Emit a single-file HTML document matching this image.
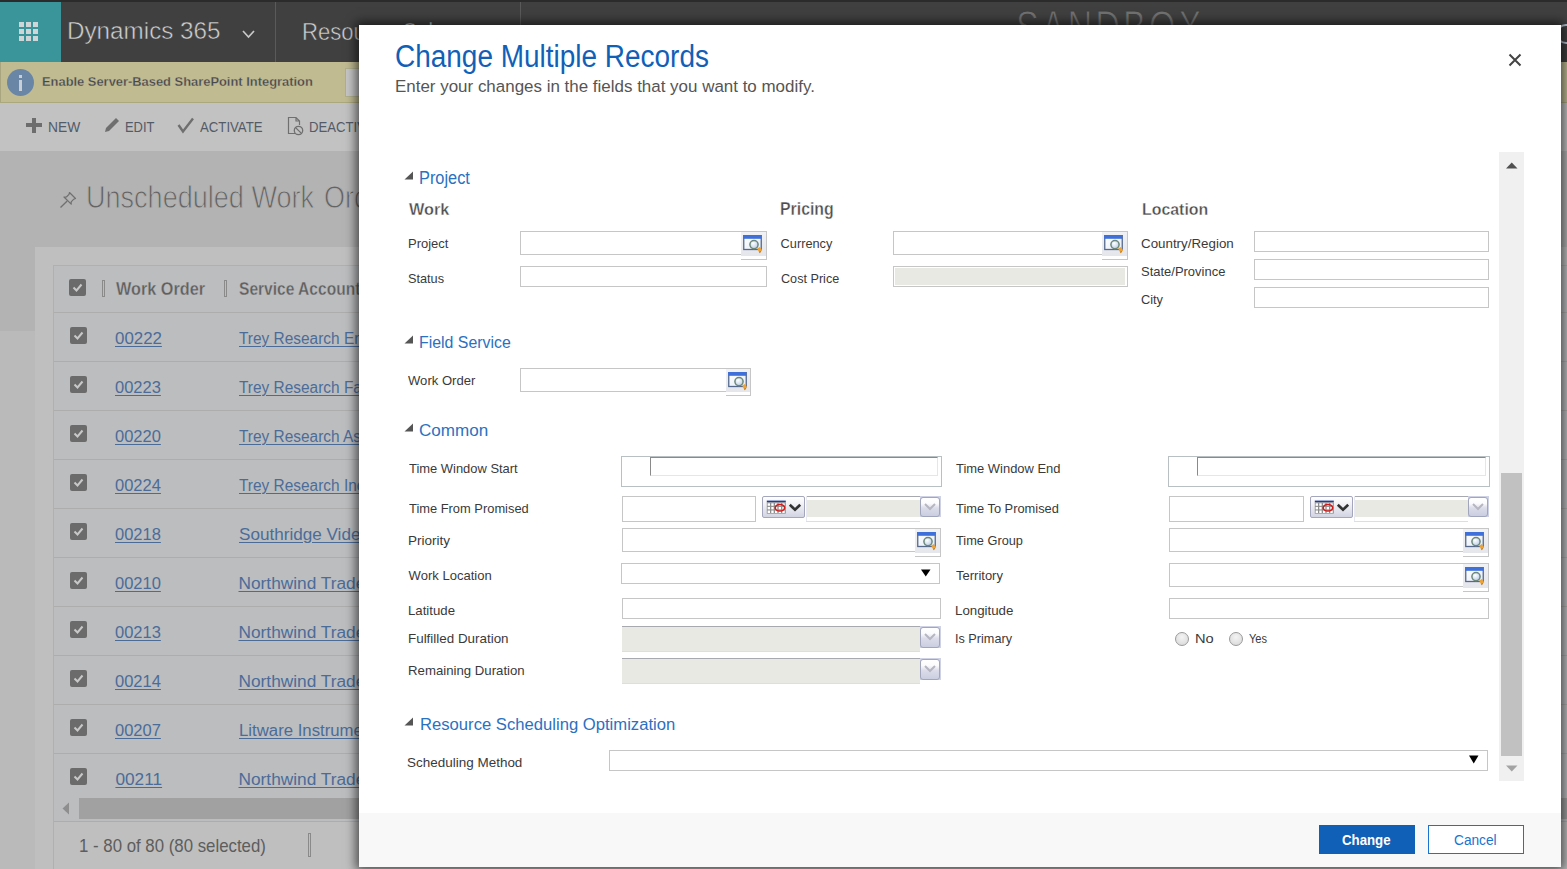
<!DOCTYPE html>
<html><head><meta charset="utf-8"><style>
html,body{margin:0;padding:0}
body{width:1567px;height:869px;overflow:hidden;position:relative;font-family:"Liberation Sans",sans-serif}
.r{position:absolute}
.t{position:absolute;white-space:pre}
</style></head><body>
<div class="r" style="left:0px;top:0px;width:1567px;height:869px;background:#b3b3b3"></div>
<div class="r" style="left:0px;top:0px;width:1567px;height:62px;background:#404040"></div>
<div class="r" style="left:0px;top:0px;width:1567px;height:2px;background:#2b2b2b"></div>
<div class="r" style="left:0px;top:2px;width:61px;height:60px;background:#3a959b"></div>
<div class="r" style="left:19px;top:22px;width:5px;height:5px;background:#cfd6d7"></div>
<div class="r" style="left:26px;top:22px;width:5px;height:5px;background:#cfd6d7"></div>
<div class="r" style="left:33px;top:22px;width:5px;height:5px;background:#cfd6d7"></div>
<div class="r" style="left:19px;top:29px;width:5px;height:5px;background:#cfd6d7"></div>
<div class="r" style="left:26px;top:29px;width:5px;height:5px;background:#cfd6d7"></div>
<div class="r" style="left:33px;top:29px;width:5px;height:5px;background:#cfd6d7"></div>
<div class="r" style="left:19px;top:36px;width:5px;height:5px;background:#cfd6d7"></div>
<div class="r" style="left:26px;top:36px;width:5px;height:5px;background:#cfd6d7"></div>
<div class="r" style="left:33px;top:36px;width:5px;height:5px;background:#cfd6d7"></div>
<div class="t" style="left:66.60px;top:19.26px;font-size:24.78px;line-height:24.78px;color:#d0d0d0;font-weight:400;transform:scaleX(0.9786);transform-origin:0 0;-webkit-text-stroke:0.5px #404040;">Dynamics 365</div>
<svg class="r" style="left:242px;top:30px" width="13" height="9"><polyline points="1,1 6.5,7 12,1" fill="none" stroke="#c8c8c8" stroke-width="1.7"/></svg>
<div class="r" style="left:275px;top:2px;width:1px;height:60px;background:#5a5a5a"></div>
<div class="t" style="left:302.00px;top:20.14px;font-size:24.80px;line-height:24.80px;color:#d0d0d0;font-weight:400;transform:scaleX(0.8900);transform-origin:0 0;-webkit-text-stroke:0.5px #404040;">Resource Sch</div>
<div class="r" style="left:520px;top:2px;width:1px;height:60px;background:#5a5a5a"></div>
<div class="t" style="left:1016.00px;top:3.63px;font-size:46.00px;line-height:46.00px;color:#727272;font-weight:400;transform:scaleX(0.7440);transform-origin:0 0;letter-spacing:4px;-webkit-text-stroke:1px #3e3e3e;">SANDBOX</div>
<div class="r" style="left:0px;top:62px;width:1567px;height:40px;background:#c1bb92"></div>
<div class="r" style="left:0px;top:62px;width:1px;height:40px;background:#a9a57f"></div>
<div class="r" style="left:7px;top:69px;width:27px;height:27px;border-radius:50%;background:#6a86a6"></div>
<div class="r" style="left:19px;top:75px;width:3px;height:3px;background:#c9cfd6"></div>
<div class="r" style="left:19px;top:80px;width:3px;height:11px;background:#c9cfd6"></div>
<div class="t" style="left:41.80px;top:75.31px;font-size:13.48px;line-height:13.48px;color:#46484f;font-weight:700;transform:scaleX(0.9572);transform-origin:0 0;-webkit-text-stroke:0.3px #c1bb92;">Enable Server-Based SharePoint Integration</div>
<div class="r" style="left:345px;top:68px;width:25px;height:29px;background:#c6c6c6;border:1px solid #b0b08e;box-sizing:border-box"></div>
<div class="r" style="left:0px;top:102px;width:1567px;height:1px;background:#aca87e"></div>
<div class="r" style="left:0px;top:103px;width:1567px;height:48px;background:#c2c2c2"></div>
<div class="r" style="left:32px;top:118px;width:4px;height:15px;background:#6d6d6d"></div>
<div class="r" style="left:26px;top:123px;width:16px;height:4px;background:#6d6d6d"></div>
<div class="t" style="left:47.60px;top:120.41px;font-size:14.78px;line-height:14.78px;color:#545b68;font-weight:400;transform:scaleX(0.9352);transform-origin:0 0;">NEW</div>
<svg class="r" style="left:103px;top:117px" width="18" height="17"><path d="M2,15 L3,11 L13,1 L16,4 L6,14 Z" fill="#6f6f6f"/></svg>
<div class="t" style="left:124.80px;top:120.41px;font-size:14.78px;line-height:14.78px;color:#545b68;font-weight:400;transform:scaleX(0.8753);transform-origin:0 0;">EDIT</div>
<svg class="r" style="left:177px;top:117px" width="18" height="17"><polyline points="1.5,8 6,14.5 16,1.5" fill="none" stroke="#6f6f6f" stroke-width="2.4"/></svg>
<div class="t" style="left:200.20px;top:120.41px;font-size:14.78px;line-height:14.78px;color:#545b68;font-weight:400;transform:scaleX(0.8932);transform-origin:0 0;">ACTIVATE</div>
<svg class="r" style="left:287px;top:116px" width="17" height="20"><path d="M8.5,17.5 H1.5 V1.5 H9 L12.5,5 V9 M9,1.5 V5 H12.5" fill="none" stroke="#6f6f6f" stroke-width="1.2"/><circle cx="11.5" cy="14.5" r="4.2" fill="none" stroke="#6f6f6f" stroke-width="1.3"/><line x1="8.6" y1="11.6" x2="14.4" y2="17.4" stroke="#6f6f6f" stroke-width="1.3"/></svg>
<div class="t" style="left:308.60px;top:120.41px;font-size:14.78px;line-height:14.78px;color:#545b68;font-weight:400;transform:scaleX(0.8900);transform-origin:0 0;">DEACTIVATE</div>
<svg class="r" style="left:59px;top:190px" width="19" height="19"><path d="M10.5,2.5 L16.5,8.5 L14.8,9.2 L12.2,11.8 L12.2,14.2 L5,7 L7.4,7 L10,4.4 Z" fill="none" stroke="#707070" stroke-width="1.2" stroke-linejoin="round"/><path d="M8.2,11 L1.5,17.5" stroke="#707070" stroke-width="1.3"/></svg>
<div class="t" style="left:86.00px;top:183.14px;font-size:30.72px;line-height:30.72px;color:#646464;font-weight:400;transform:scaleX(0.8804);transform-origin:0 0;-webkit-text-stroke:0.9px #b3b3b3;">Unscheduled Work</div>
<div class="t" style="left:323.50px;top:183.16px;font-size:30.70px;line-height:30.70px;color:#646464;font-weight:400;transform:scaleX(0.8800);transform-origin:0 0;-webkit-text-stroke:0.9px #b3b3b3;">Orders</div>
<div class="r" style="left:0px;top:331px;width:35px;height:538px;background:#bababa"></div>
<div class="r" style="left:35px;top:247px;width:1532px;height:622px;background:#bfbfbf"></div>
<div class="r" style="left:53px;top:265px;width:1514px;height:531px;background:#bcbdbf"></div>
<div class="r" style="left:53px;top:265px;width:1514px;height:1px;background:#b0b0b0"></div>
<div class="r" style="left:53px;top:265px;width:1px;height:604px;background:#b0b0b0"></div>
<div class="r" style="left:54px;top:312px;width:1513px;height:1px;background:#adadad"></div>
<div class="r" style="left:69px;top:279px;width:17px;height:17px;border-radius:2px;background:#6b6b6b"></div>
<svg class="r" style="left:69px;top:279px" width="17" height="17"><polyline points="4.5,8.5 7.5,11.5 12.5,5.5" fill="none" stroke="#c8c8c8" stroke-width="2"/></svg>
<div class="r" style="left:102px;top:280px;width:3px;height:17px;border:1px solid #8a8a8a;box-sizing:border-box"></div>
<div class="r" style="left:224px;top:280px;width:3px;height:17px;border:1px solid #8a8a8a;box-sizing:border-box"></div>
<div class="t" style="left:116.40px;top:279.69px;font-size:18.12px;line-height:18.12px;color:#606060;font-weight:700;transform:scaleX(0.8961);transform-origin:0 0;-webkit-text-stroke:0.35px #bcbdbf;">Work Order</div>
<div class="t" style="left:238.50px;top:279.71px;font-size:18.10px;line-height:18.10px;color:#606060;font-weight:700;transform:scaleX(0.8600);transform-origin:0 0;-webkit-text-stroke:0.35px #bcbdbf;">Service Account</div>
<div class="r" style="left:70px;top:327px;width:17px;height:17px;border-radius:2px;background:#6b6b6b"></div>
<svg class="r" style="left:70px;top:327px" width="17" height="17"><polyline points="4.5,8.5 7.5,11.5 12.5,5.5" fill="none" stroke="#c8c8c8" stroke-width="2"/></svg>
<div class="t" style="left:115.40px;top:330.33px;font-size:17.25px;line-height:17.25px;color:#4b6c99;font-weight:400;transform:scaleX(0.9778);transform-origin:0 0;text-decoration:underline;text-underline-offset:2px;">00222</div>
<div class="t" style="left:238.50px;top:330.28px;font-size:17.30px;line-height:17.30px;color:#4b6c99;font-weight:400;transform:scaleX(0.8930);transform-origin:0 0;text-decoration:underline;text-underline-offset:2px;">Trey Research Enterprises</div>
<div class="r" style="left:54px;top:361px;width:1513px;height:1px;background:#adadad"></div>
<div class="r" style="left:70px;top:376px;width:17px;height:17px;border-radius:2px;background:#6b6b6b"></div>
<svg class="r" style="left:70px;top:376px" width="17" height="17"><polyline points="4.5,8.5 7.5,11.5 12.5,5.5" fill="none" stroke="#c8c8c8" stroke-width="2"/></svg>
<div class="t" style="left:115.40px;top:379.33px;font-size:17.25px;line-height:17.25px;color:#4b6c99;font-weight:400;transform:scaleX(0.9567);transform-origin:0 0;text-decoration:underline;text-underline-offset:2px;">00223</div>
<div class="t" style="left:238.50px;top:379.28px;font-size:17.30px;line-height:17.30px;color:#4b6c99;font-weight:400;transform:scaleX(0.8930);transform-origin:0 0;text-decoration:underline;text-underline-offset:2px;">Trey Research Facilities</div>
<div class="r" style="left:54px;top:410px;width:1513px;height:1px;background:#adadad"></div>
<div class="r" style="left:70px;top:425px;width:17px;height:17px;border-radius:2px;background:#6b6b6b"></div>
<svg class="r" style="left:70px;top:425px" width="17" height="17"><polyline points="4.5,8.5 7.5,11.5 12.5,5.5" fill="none" stroke="#c8c8c8" stroke-width="2"/></svg>
<div class="t" style="left:115.40px;top:428.33px;font-size:17.25px;line-height:17.25px;color:#4b6c99;font-weight:400;transform:scaleX(0.9567);transform-origin:0 0;text-decoration:underline;text-underline-offset:2px;">00220</div>
<div class="t" style="left:238.50px;top:428.28px;font-size:17.30px;line-height:17.30px;color:#4b6c99;font-weight:400;transform:scaleX(0.8930);transform-origin:0 0;text-decoration:underline;text-underline-offset:2px;">Trey Research Associates</div>
<div class="r" style="left:54px;top:459px;width:1513px;height:1px;background:#adadad"></div>
<div class="r" style="left:70px;top:474px;width:17px;height:17px;border-radius:2px;background:#6b6b6b"></div>
<svg class="r" style="left:70px;top:474px" width="17" height="17"><polyline points="4.5,8.5 7.5,11.5 12.5,5.5" fill="none" stroke="#c8c8c8" stroke-width="2"/></svg>
<div class="t" style="left:115.40px;top:477.33px;font-size:17.25px;line-height:17.25px;color:#4b6c99;font-weight:400;transform:scaleX(0.9576);transform-origin:0 0;text-decoration:underline;text-underline-offset:2px;">00224</div>
<div class="t" style="left:238.50px;top:477.28px;font-size:17.30px;line-height:17.30px;color:#4b6c99;font-weight:400;transform:scaleX(0.8930);transform-origin:0 0;text-decoration:underline;text-underline-offset:2px;">Trey Research Inc</div>
<div class="r" style="left:54px;top:508px;width:1513px;height:1px;background:#adadad"></div>
<div class="r" style="left:70px;top:523px;width:17px;height:17px;border-radius:2px;background:#6b6b6b"></div>
<svg class="r" style="left:70px;top:523px" width="17" height="17"><polyline points="4.5,8.5 7.5,11.5 12.5,5.5" fill="none" stroke="#c8c8c8" stroke-width="2"/></svg>
<div class="t" style="left:115.40px;top:526.33px;font-size:17.25px;line-height:17.25px;color:#4b6c99;font-weight:400;transform:scaleX(0.9567);transform-origin:0 0;text-decoration:underline;text-underline-offset:2px;">00218</div>
<div class="t" style="left:238.50px;top:526.28px;font-size:17.30px;line-height:17.30px;color:#4b6c99;font-weight:400;transform:scaleX(0.9900);transform-origin:0 0;text-decoration:underline;text-underline-offset:2px;">Southridge Video</div>
<div class="r" style="left:54px;top:557px;width:1513px;height:1px;background:#adadad"></div>
<div class="r" style="left:70px;top:572px;width:17px;height:17px;border-radius:2px;background:#6b6b6b"></div>
<svg class="r" style="left:70px;top:572px" width="17" height="17"><polyline points="4.5,8.5 7.5,11.5 12.5,5.5" fill="none" stroke="#c8c8c8" stroke-width="2"/></svg>
<div class="t" style="left:115.40px;top:575.33px;font-size:17.25px;line-height:17.25px;color:#4b6c99;font-weight:400;transform:scaleX(0.9567);transform-origin:0 0;text-decoration:underline;text-underline-offset:2px;">00210</div>
<div class="t" style="left:238.50px;top:575.28px;font-size:17.30px;line-height:17.30px;color:#4b6c99;font-weight:400;text-decoration:underline;text-underline-offset:2px;">Northwind Traders</div>
<div class="r" style="left:54px;top:606px;width:1513px;height:1px;background:#adadad"></div>
<div class="r" style="left:70px;top:621px;width:17px;height:17px;border-radius:2px;background:#6b6b6b"></div>
<svg class="r" style="left:70px;top:621px" width="17" height="17"><polyline points="4.5,8.5 7.5,11.5 12.5,5.5" fill="none" stroke="#c8c8c8" stroke-width="2"/></svg>
<div class="t" style="left:115.40px;top:624.33px;font-size:17.25px;line-height:17.25px;color:#4b6c99;font-weight:400;transform:scaleX(0.9567);transform-origin:0 0;text-decoration:underline;text-underline-offset:2px;">00213</div>
<div class="t" style="left:238.50px;top:624.28px;font-size:17.30px;line-height:17.30px;color:#4b6c99;font-weight:400;text-decoration:underline;text-underline-offset:2px;">Northwind Traders</div>
<div class="r" style="left:54px;top:655px;width:1513px;height:1px;background:#adadad"></div>
<div class="r" style="left:70px;top:670px;width:17px;height:17px;border-radius:2px;background:#6b6b6b"></div>
<svg class="r" style="left:70px;top:670px" width="17" height="17"><polyline points="4.5,8.5 7.5,11.5 12.5,5.5" fill="none" stroke="#c8c8c8" stroke-width="2"/></svg>
<div class="t" style="left:115.40px;top:673.33px;font-size:17.25px;line-height:17.25px;color:#4b6c99;font-weight:400;transform:scaleX(0.9576);transform-origin:0 0;text-decoration:underline;text-underline-offset:2px;">00214</div>
<div class="t" style="left:238.50px;top:673.28px;font-size:17.30px;line-height:17.30px;color:#4b6c99;font-weight:400;text-decoration:underline;text-underline-offset:2px;">Northwind Traders</div>
<div class="r" style="left:54px;top:704px;width:1513px;height:1px;background:#adadad"></div>
<div class="r" style="left:70px;top:719px;width:17px;height:17px;border-radius:2px;background:#6b6b6b"></div>
<svg class="r" style="left:70px;top:719px" width="17" height="17"><polyline points="4.5,8.5 7.5,11.5 12.5,5.5" fill="none" stroke="#c8c8c8" stroke-width="2"/></svg>
<div class="t" style="left:115.40px;top:722.33px;font-size:17.25px;line-height:17.25px;color:#4b6c99;font-weight:400;transform:scaleX(0.9567);transform-origin:0 0;text-decoration:underline;text-underline-offset:2px;">00207</div>
<div class="t" style="left:238.50px;top:722.28px;font-size:17.30px;line-height:17.30px;color:#4b6c99;font-weight:400;transform:scaleX(0.9700);transform-origin:0 0;text-decoration:underline;text-underline-offset:2px;">Litware Instruments</div>
<div class="r" style="left:54px;top:753px;width:1513px;height:1px;background:#adadad"></div>
<div class="r" style="left:70px;top:768px;width:17px;height:17px;border-radius:2px;background:#6b6b6b"></div>
<svg class="r" style="left:70px;top:768px" width="17" height="17"><polyline points="4.5,8.5 7.5,11.5 12.5,5.5" fill="none" stroke="#c8c8c8" stroke-width="2"/></svg>
<div class="t" style="left:115.40px;top:771.33px;font-size:17.25px;line-height:17.25px;color:#4b6c99;font-weight:400;text-decoration:underline;text-underline-offset:2px;">00211</div>
<div class="t" style="left:238.50px;top:771.28px;font-size:17.30px;line-height:17.30px;color:#4b6c99;font-weight:400;text-decoration:underline;text-underline-offset:2px;">Northwind Traders</div>
<div class="r" style="left:54px;top:796px;width:1513px;height:25px;background:#bcbdbf"></div>
<svg class="r" style="left:62px;top:802px" width="8" height="13"><polygon points="7,0.5 7,12.5 0.5,6.5" fill="#8e8e8e"/></svg>
<div class="r" style="left:79px;top:798px;width:1488px;height:21px;background:#a1a1a1"></div>
<div class="r" style="left:54px;top:821px;width:1513px;height:1px;background:#adadad"></div>
<div class="t" style="left:78.80px;top:838.44px;font-size:17.83px;line-height:17.83px;color:#5d5d5d;font-weight:400;transform:scaleX(0.9427);transform-origin:0 0;">1 - 80 of 80 (80 selected)</div>
<div class="r" style="left:308px;top:833px;width:3px;height:24px;border:1px solid #8a8a8a;box-sizing:border-box"></div>
<div class="r" style="left:1556px;top:24px;width:20px;height:20px;border-radius:50%;border:2px solid #b8c4d4;box-sizing:border-box"></div>
<div class="r" style="left:359px;top:25px;width:1202px;height:842px;background:#fff;box-shadow:0 0 10px 3px rgba(0,0,0,0.62)"></div>
<div class="r" style="left:359px;top:813px;width:1202px;height:54px;background:#f8f8f8"></div>
<div class="t" style="left:395.20px;top:40.63px;font-size:31.45px;line-height:31.45px;color:#1160b7;font-weight:400;transform:scaleX(0.8893);transform-origin:0 0;">Change Multiple Records</div>
<div class="t" style="left:395.00px;top:78.74px;font-size:16.52px;line-height:16.52px;color:#555555;font-weight:400;transform:scaleX(1.0262);transform-origin:0 0;">Enter your changes in the fields that you want to modify.</div>
<svg class="r" style="left:1508px;top:53px" width="14" height="14"><path d="M1.5,1.5 L12.5,12.5 M12.5,1.5 L1.5,12.5" stroke="#444" stroke-width="2"/></svg>
<div class="r" style="left:1499px;top:152px;width:25px;height:629px;background:#f0f0f0"></div>
<div class="r" style="left:1501px;top:473px;width:21px;height:283px;background:#c1c1c1"></div>
<svg class="r" style="left:1506px;top:162px" width="12" height="7"><polygon points="0,6.5 11.5,6.5 5.75,0.5" fill="#505050"/></svg>
<svg class="r" style="left:1506px;top:765px" width="12" height="7"><polygon points="0,0.5 11.5,0.5 5.75,6.5" fill="#a3a3a3"/></svg>
<svg class="r" style="left:404px;top:171px" width="10" height="9"><polygon points="0.5,8.5 9,8.5 9,0.5" fill="#555"/></svg>
<div class="t" style="left:419.40px;top:168.65px;font-size:18.41px;line-height:18.41px;color:#2b71c2;font-weight:400;transform:scaleX(0.8873);transform-origin:0 0;">Project</div>
<svg class="r" style="left:404px;top:335px" width="10" height="9"><polygon points="0.5,8.5 9,8.5 9,0.5" fill="#555"/></svg>
<div class="t" style="left:419.00px;top:334.35px;font-size:17.10px;line-height:17.10px;color:#2b71c2;font-weight:400;transform:scaleX(0.9290);transform-origin:0 0;">Field Service</div>
<svg class="r" style="left:404px;top:423px" width="10" height="9"><polygon points="0.5,8.5 9,8.5 9,0.5" fill="#555"/></svg>
<div class="t" style="left:419.00px;top:422.82px;font-size:16.67px;line-height:16.67px;color:#2b71c2;font-weight:400;transform:scaleX(1.0241);transform-origin:0 0;">Common</div>
<svg class="r" style="left:404px;top:717px" width="10" height="9"><polygon points="0.5,8.5 9,8.5 9,0.5" fill="#555"/></svg>
<div class="t" style="left:419.80px;top:716.33px;font-size:17.25px;line-height:17.25px;color:#2b71c2;font-weight:400;transform:scaleX(0.9646);transform-origin:0 0;">Resource Scheduling Optimization</div>
<div class="t" style="left:408.60px;top:201.30px;font-size:17.39px;line-height:17.39px;color:#4c4c4c;font-weight:700;transform:scaleX(0.9363);transform-origin:0 0;-webkit-text-stroke:0.35px #fff;">Work</div>
<div class="t" style="left:780.40px;top:201.28px;font-size:17.54px;line-height:17.54px;color:#4c4c4c;font-weight:700;transform:scaleX(0.9039);transform-origin:0 0;-webkit-text-stroke:0.35px #fff;">Pricing</div>
<div class="t" style="left:1141.60px;top:201.67px;font-size:16.96px;line-height:16.96px;color:#4c4c4c;font-weight:700;transform:scaleX(0.9381);transform-origin:0 0;-webkit-text-stroke:0.35px #fff;">Location</div>
<div class="t" style="left:407.60px;top:238.17px;font-size:12.46px;line-height:12.46px;color:#3a3a3a;font-weight:400;transform:scaleX(1.0428);transform-origin:0 0;">Project</div>
<div class="t" style="left:407.60px;top:271.69px;font-size:13.62px;line-height:13.62px;color:#3a3a3a;font-weight:400;transform:scaleX(0.9343);transform-origin:0 0;">Status</div>
<div class="t" style="left:780.60px;top:238.32px;font-size:12.75px;line-height:12.75px;color:#3a3a3a;font-weight:400;">Currency</div>
<div class="t" style="left:780.60px;top:273.10px;font-size:12.90px;line-height:12.90px;color:#3a3a3a;font-weight:400;transform:scaleX(0.9792);transform-origin:0 0;">Cost Price</div>
<div class="t" style="left:1141.00px;top:236.88px;font-size:13.04px;line-height:13.04px;color:#3a3a3a;font-weight:400;transform:scaleX(1.0244);transform-origin:0 0;">Country/Region</div>
<div class="t" style="left:1141.00px;top:264.78px;font-size:13.04px;line-height:13.04px;color:#3a3a3a;font-weight:400;transform:scaleX(0.9955);transform-origin:0 0;">State/Province</div>
<div class="t" style="left:1141.00px;top:293.08px;font-size:13.04px;line-height:13.04px;color:#3a3a3a;font-weight:400;transform:scaleX(0.9810);transform-origin:0 0;">City</div>
<div class="t" style="left:408.40px;top:375.19px;font-size:12.32px;line-height:12.32px;color:#3a3a3a;font-weight:400;transform:scaleX(1.0627);transform-origin:0 0;">Work Order</div>
<div class="t" style="left:408.60px;top:461.88px;font-size:13.04px;line-height:13.04px;color:#3a3a3a;font-weight:400;transform:scaleX(0.9920);transform-origin:0 0;">Time Window Start</div>
<div class="t" style="left:408.60px;top:501.51px;font-size:13.48px;line-height:13.48px;color:#3a3a3a;font-weight:400;transform:scaleX(0.9561);transform-origin:0 0;">Time From Promised</div>
<div class="t" style="left:407.60px;top:534.80px;font-size:12.90px;line-height:12.90px;color:#3a3a3a;font-weight:400;transform:scaleX(1.0476);transform-origin:0 0;">Priority</div>
<div class="t" style="left:408.60px;top:568.58px;font-size:13.04px;line-height:13.04px;color:#3a3a3a;font-weight:400;">Work Location</div>
<div class="t" style="left:407.60px;top:603.61px;font-size:13.48px;line-height:13.48px;color:#3a3a3a;font-weight:400;transform:scaleX(0.9804);transform-origin:0 0;">Latitude</div>
<div class="t" style="left:407.60px;top:631.71px;font-size:13.48px;line-height:13.48px;color:#3a3a3a;font-weight:400;transform:scaleX(0.9951);transform-origin:0 0;">Fulfilled Duration</div>
<div class="t" style="left:407.60px;top:663.89px;font-size:13.62px;line-height:13.62px;color:#3a3a3a;font-weight:400;transform:scaleX(0.9704);transform-origin:0 0;">Remaining Duration</div>
<div class="t" style="left:955.60px;top:461.88px;font-size:13.04px;line-height:13.04px;color:#3a3a3a;font-weight:400;transform:scaleX(0.9930);transform-origin:0 0;">Time Window End</div>
<div class="t" style="left:955.60px;top:501.51px;font-size:13.48px;line-height:13.48px;color:#3a3a3a;font-weight:400;transform:scaleX(0.9550);transform-origin:0 0;">Time To Promised</div>
<div class="t" style="left:955.60px;top:534.80px;font-size:12.90px;line-height:12.90px;color:#3a3a3a;font-weight:400;transform:scaleX(0.9909);transform-origin:0 0;">Time Group</div>
<div class="t" style="left:955.60px;top:570.31px;font-size:12.17px;line-height:12.17px;color:#3a3a3a;font-weight:400;transform:scaleX(1.0690);transform-origin:0 0;">Territory</div>
<div class="t" style="left:954.60px;top:603.61px;font-size:13.48px;line-height:13.48px;color:#3a3a3a;font-weight:400;transform:scaleX(0.9869);transform-origin:0 0;">Longitude</div>
<div class="t" style="left:954.60px;top:631.71px;font-size:13.48px;line-height:13.48px;color:#3a3a3a;font-weight:400;transform:scaleX(0.9401);transform-origin:0 0;">Is Primary</div>
<div class="t" style="left:1195.00px;top:633.35px;font-size:12.61px;line-height:12.61px;color:#3a3a3a;font-weight:400;transform:scaleX(1.1617);transform-origin:0 0;">No</div>
<div class="t" style="left:1249.40px;top:633.35px;font-size:12.61px;line-height:12.61px;color:#3a3a3a;font-weight:400;transform:scaleX(0.8772);transform-origin:0 0;">Yes</div>
<div class="t" style="left:407.00px;top:756.70px;font-size:12.90px;line-height:12.90px;color:#3a3a3a;font-weight:400;transform:scaleX(1.0453);transform-origin:0 0;">Scheduling Method</div>
<div class="r" style="left:520px;top:231px;width:221px;height:24px;border:1px solid #c6c6c6;border-right:none;box-sizing:border-box;background:#fff"></div>
<div class="r" style="left:741px;top:231px;width:26px;height:29px;border:1px solid #c6c6c6;border-left:none;box-sizing:border-box;background:#fff"></div>
<div class="r" style="left:741px;top:232px;width:25px;height:24px;background:linear-gradient(#f1f2f5,#e4e6eb)"></div>
<div class="r" style="left:743px;top:235px;width:20px;height:20px"><svg width="21" height="20" viewBox="0 0 21 20"><defs><linearGradient id="lg1" x1="0" y1="0" x2="1" y2="1"><stop offset="0" stop-color="#ffffff"/><stop offset="1" stop-color="#e4ecf8"/></linearGradient><radialGradient id="rg1" cx="0.4" cy="0.35" r="0.7"><stop offset="0" stop-color="#ffffff"/><stop offset="1" stop-color="#b8cce8"/></radialGradient></defs><rect x="0.75" y="0.5" width="17.5" height="14" fill="url(#lg1)" stroke="#56698c" stroke-width="1.3"/><rect x="0.1" y="0" width="18.2" height="3.8" fill="#3f6fd8"/><circle cx="11" cy="9.6" r="4.1" fill="url(#rg1)" stroke="#6d8878" stroke-width="1.5"/><path d="M14.2,13.6 L16.8,12 L19.2,15.2 L16.6,18.2 Z" fill="#eea234"/><path d="M16.6,18.2 L17.8,16.8 L16.8,16" fill="#8a5a20"/></svg></div>
<div class="r" style="left:520px;top:266px;width:247px;height:21px;border:1px solid #c6c6c6;box-sizing:border-box;background:#fff"></div>
<div class="r" style="left:893px;top:231px;width:209px;height:24px;border:1px solid #c6c6c6;border-right:none;box-sizing:border-box;background:#fff"></div>
<div class="r" style="left:1102px;top:231px;width:26px;height:29px;border:1px solid #c6c6c6;border-left:none;box-sizing:border-box;background:#fff"></div>
<div class="r" style="left:1102px;top:232px;width:25px;height:24px;background:linear-gradient(#f1f2f5,#e4e6eb)"></div>
<div class="r" style="left:1104px;top:235px;width:20px;height:20px"><svg width="21" height="20" viewBox="0 0 21 20"><defs><linearGradient id="lg2" x1="0" y1="0" x2="1" y2="1"><stop offset="0" stop-color="#ffffff"/><stop offset="1" stop-color="#e4ecf8"/></linearGradient><radialGradient id="rg2" cx="0.4" cy="0.35" r="0.7"><stop offset="0" stop-color="#ffffff"/><stop offset="1" stop-color="#b8cce8"/></radialGradient></defs><rect x="0.75" y="0.5" width="17.5" height="14" fill="url(#lg2)" stroke="#56698c" stroke-width="1.3"/><rect x="0.1" y="0" width="18.2" height="3.8" fill="#3f6fd8"/><circle cx="11" cy="9.6" r="4.1" fill="url(#rg2)" stroke="#6d8878" stroke-width="1.5"/><path d="M14.2,13.6 L16.8,12 L19.2,15.2 L16.6,18.2 Z" fill="#eea234"/><path d="M16.6,18.2 L17.8,16.8 L16.8,16" fill="#8a5a20"/></svg></div>
<div class="r" style="left:893px;top:266px;width:235px;height:21px;border:1px solid #c6c6c6;box-sizing:border-box;background:#fff"></div>
<div class="r" style="left:895px;top:268px;width:230px;height:17px;background:#e9e9e3"></div>
<div class="r" style="left:1254px;top:231px;width:235px;height:21px;border:1px solid #c6c6c6;box-sizing:border-box;background:#fff"></div>
<div class="r" style="left:1254px;top:259px;width:235px;height:21px;border:1px solid #c6c6c6;box-sizing:border-box;background:#fff"></div>
<div class="r" style="left:1254px;top:287px;width:235px;height:21px;border:1px solid #c6c6c6;box-sizing:border-box;background:#fff"></div>
<div class="r" style="left:520px;top:368px;width:206px;height:24px;border:1px solid #c6c6c6;border-right:none;box-sizing:border-box;background:#fff"></div>
<div class="r" style="left:726px;top:368px;width:25px;height:28px;border:1px solid #c6c6c6;border-left:none;box-sizing:border-box;background:#fff"></div>
<div class="r" style="left:726px;top:369px;width:24px;height:23px;background:linear-gradient(#f1f2f5,#e4e6eb)"></div>
<div class="r" style="left:728px;top:372px;width:20px;height:20px"><svg width="21" height="20" viewBox="0 0 21 20"><defs><linearGradient id="lg3" x1="0" y1="0" x2="1" y2="1"><stop offset="0" stop-color="#ffffff"/><stop offset="1" stop-color="#e4ecf8"/></linearGradient><radialGradient id="rg3" cx="0.4" cy="0.35" r="0.7"><stop offset="0" stop-color="#ffffff"/><stop offset="1" stop-color="#b8cce8"/></radialGradient></defs><rect x="0.75" y="0.5" width="17.5" height="14" fill="url(#lg3)" stroke="#56698c" stroke-width="1.3"/><rect x="0.1" y="0" width="18.2" height="3.8" fill="#3f6fd8"/><circle cx="11" cy="9.6" r="4.1" fill="url(#rg3)" stroke="#6d8878" stroke-width="1.5"/><path d="M14.2,13.6 L16.8,12 L19.2,15.2 L16.6,18.2 Z" fill="#eea234"/><path d="M16.6,18.2 L17.8,16.8 L16.8,16" fill="#8a5a20"/></svg></div>
<div class="r" style="left:621px;top:456px;width:321px;height:31px;border:1px solid #b9c0c4;box-sizing:border-box;background:#fff"></div>
<div class="r" style="left:650px;top:457px;width:288px;height:19px;border:1px solid #e6e6e6;border-top:1px solid #8a8a8a;border-left:1px solid #8a8a8a;box-sizing:border-box"></div>
<div class="r" style="left:1168px;top:456px;width:322px;height:31px;border:1px solid #b9c0c4;box-sizing:border-box;background:#fff"></div>
<div class="r" style="left:1197px;top:457px;width:289px;height:19px;border:1px solid #e6e6e6;border-top:1px solid #8a8a8a;border-left:1px solid #8a8a8a;box-sizing:border-box"></div>
<div class="r" style="left:622px;top:496px;width:134px;height:26px;border:1px solid #c6c6c6;box-sizing:border-box;background:#fff"></div>
<div class="r" style="left:762px;top:496px;width:43px;height:22px;border:1px solid #a4a6bc;border-radius:2px;box-sizing:border-box;background:linear-gradient(#ffffff 0%,#f4f4f8 30%,#d2d4e2 100%)"></div>
<svg class="r" style="left:762px;top:496px" width="43" height="22"><rect x="4.8" y="4.6" width="19" height="1.8" fill="#1c3c9c"/><rect x="4.8" y="6.4" width="19" height="11.2" fill="#8c8c8c"/><g fill="#fff"><rect x="5.60" y="7.30" width="2.4" height="2.5"/><rect x="9.28" y="7.30" width="2.4" height="2.5"/><rect x="12.96" y="7.30" width="2.4" height="2.5"/><rect x="16.64" y="7.30" width="2.4" height="2.5"/><rect x="20.32" y="7.30" width="2.4" height="2.5"/><rect x="5.60" y="10.90" width="2.4" height="2.5"/><rect x="9.28" y="10.90" width="2.4" height="2.5"/><rect x="12.96" y="10.90" width="2.4" height="2.5"/><rect x="16.64" y="10.90" width="2.4" height="2.5"/><rect x="20.32" y="10.90" width="2.4" height="2.5"/><rect x="5.60" y="14.50" width="2.4" height="2.5"/><rect x="9.28" y="14.50" width="2.4" height="2.5"/><rect x="12.96" y="14.50" width="2.4" height="2.5"/><rect x="16.64" y="14.50" width="2.4" height="2.5"/><rect x="20.32" y="14.50" width="2.4" height="2.5"/></g><ellipse cx="17.9" cy="11.8" rx="4.7" ry="3.3" fill="none" stroke="#d41818" stroke-width="1.5"/><polyline points="27.8,8.8 33,13.8 38.2,8.8" fill="none" stroke="#333" stroke-width="2.6"/></svg>
<div class="r" style="left:806px;top:496px;width:114px;height:1px;background:#a8a8b0"></div>
<div class="r" style="left:806px;top:496px;width:1px;height:26px;background:#e8e8f0"></div>
<div class="r" style="left:807px;top:500px;width:113px;height:17px;background:#e9e9e3"></div>
<div class="r" style="left:806px;top:521px;width:114px;height:1px;background:#dcdcec"></div>
<div class="r" style="left:920px;top:496px;width:21px;height:21px;background:#cfd2e4"></div>
<div class="r" style="left:920px;top:497px;width:20px;height:20px;border:1.5px solid #a2a6bc;border-radius:3px;box-sizing:border-box;background:linear-gradient(#ffffff 0%,#fbfbfd 30%,#dcdcea 55%,#cacee0 100%)"></div>
<svg class="r" style="left:924px;top:503px" width="12" height="8"><polyline points="1,1 6,6 11,1" fill="none" stroke="#b6b6c2" stroke-width="2"/></svg>
<div class="r" style="left:1169px;top:496px;width:135px;height:26px;border:1px solid #c6c6c6;box-sizing:border-box;background:#fff"></div>
<div class="r" style="left:1310px;top:496px;width:43px;height:22px;border:1px solid #a4a6bc;border-radius:2px;box-sizing:border-box;background:linear-gradient(#ffffff 0%,#f4f4f8 30%,#d2d4e2 100%)"></div>
<svg class="r" style="left:1310px;top:496px" width="43" height="22"><rect x="4.8" y="4.6" width="19" height="1.8" fill="#1c3c9c"/><rect x="4.8" y="6.4" width="19" height="11.2" fill="#8c8c8c"/><g fill="#fff"><rect x="5.60" y="7.30" width="2.4" height="2.5"/><rect x="9.28" y="7.30" width="2.4" height="2.5"/><rect x="12.96" y="7.30" width="2.4" height="2.5"/><rect x="16.64" y="7.30" width="2.4" height="2.5"/><rect x="20.32" y="7.30" width="2.4" height="2.5"/><rect x="5.60" y="10.90" width="2.4" height="2.5"/><rect x="9.28" y="10.90" width="2.4" height="2.5"/><rect x="12.96" y="10.90" width="2.4" height="2.5"/><rect x="16.64" y="10.90" width="2.4" height="2.5"/><rect x="20.32" y="10.90" width="2.4" height="2.5"/><rect x="5.60" y="14.50" width="2.4" height="2.5"/><rect x="9.28" y="14.50" width="2.4" height="2.5"/><rect x="12.96" y="14.50" width="2.4" height="2.5"/><rect x="16.64" y="14.50" width="2.4" height="2.5"/><rect x="20.32" y="14.50" width="2.4" height="2.5"/></g><ellipse cx="17.9" cy="11.8" rx="4.7" ry="3.3" fill="none" stroke="#d41818" stroke-width="1.5"/><polyline points="27.8,8.8 33,13.8 38.2,8.8" fill="none" stroke="#333" stroke-width="2.6"/></svg>
<div class="r" style="left:1354px;top:496px;width:114px;height:1px;background:#a8a8b0"></div>
<div class="r" style="left:1354px;top:496px;width:1px;height:26px;background:#e8e8f0"></div>
<div class="r" style="left:1355px;top:500px;width:113px;height:17px;background:#e9e9e3"></div>
<div class="r" style="left:1354px;top:521px;width:114px;height:1px;background:#dcdcec"></div>
<div class="r" style="left:1468px;top:496px;width:21px;height:21px;background:#cfd2e4"></div>
<div class="r" style="left:1468px;top:497px;width:20px;height:20px;border:1.5px solid #a2a6bc;border-radius:3px;box-sizing:border-box;background:linear-gradient(#ffffff 0%,#fbfbfd 30%,#dcdcea 55%,#cacee0 100%)"></div>
<svg class="r" style="left:1472px;top:503px" width="12" height="8"><polyline points="1,1 6,6 11,1" fill="none" stroke="#b6b6c2" stroke-width="2"/></svg>
<div class="r" style="left:622px;top:528px;width:293px;height:24px;border:1px solid #c6c6c6;border-right:none;box-sizing:border-box;background:#fff"></div>
<div class="r" style="left:915px;top:528px;width:26px;height:29px;border:1px solid #c6c6c6;border-left:none;box-sizing:border-box;background:#fff"></div>
<div class="r" style="left:915px;top:529px;width:25px;height:24px;background:linear-gradient(#f1f2f5,#e4e6eb)"></div>
<div class="r" style="left:917px;top:532px;width:20px;height:20px"><svg width="21" height="20" viewBox="0 0 21 20"><defs><linearGradient id="lg4" x1="0" y1="0" x2="1" y2="1"><stop offset="0" stop-color="#ffffff"/><stop offset="1" stop-color="#e4ecf8"/></linearGradient><radialGradient id="rg4" cx="0.4" cy="0.35" r="0.7"><stop offset="0" stop-color="#ffffff"/><stop offset="1" stop-color="#b8cce8"/></radialGradient></defs><rect x="0.75" y="0.5" width="17.5" height="14" fill="url(#lg4)" stroke="#56698c" stroke-width="1.3"/><rect x="0.1" y="0" width="18.2" height="3.8" fill="#3f6fd8"/><circle cx="11" cy="9.6" r="4.1" fill="url(#rg4)" stroke="#6d8878" stroke-width="1.5"/><path d="M14.2,13.6 L16.8,12 L19.2,15.2 L16.6,18.2 Z" fill="#eea234"/><path d="M16.6,18.2 L17.8,16.8 L16.8,16" fill="#8a5a20"/></svg></div>
<div class="r" style="left:1169px;top:528px;width:294px;height:24px;border:1px solid #c6c6c6;border-right:none;box-sizing:border-box;background:#fff"></div>
<div class="r" style="left:1463px;top:528px;width:26px;height:29px;border:1px solid #c6c6c6;border-left:none;box-sizing:border-box;background:#fff"></div>
<div class="r" style="left:1463px;top:529px;width:25px;height:24px;background:linear-gradient(#f1f2f5,#e4e6eb)"></div>
<div class="r" style="left:1465px;top:532px;width:20px;height:20px"><svg width="21" height="20" viewBox="0 0 21 20"><defs><linearGradient id="lg5" x1="0" y1="0" x2="1" y2="1"><stop offset="0" stop-color="#ffffff"/><stop offset="1" stop-color="#e4ecf8"/></linearGradient><radialGradient id="rg5" cx="0.4" cy="0.35" r="0.7"><stop offset="0" stop-color="#ffffff"/><stop offset="1" stop-color="#b8cce8"/></radialGradient></defs><rect x="0.75" y="0.5" width="17.5" height="14" fill="url(#lg5)" stroke="#56698c" stroke-width="1.3"/><rect x="0.1" y="0" width="18.2" height="3.8" fill="#3f6fd8"/><circle cx="11" cy="9.6" r="4.1" fill="url(#rg5)" stroke="#6d8878" stroke-width="1.5"/><path d="M14.2,13.6 L16.8,12 L19.2,15.2 L16.6,18.2 Z" fill="#eea234"/><path d="M16.6,18.2 L17.8,16.8 L16.8,16" fill="#8a5a20"/></svg></div>
<div class="r" style="left:621px;top:563px;width:319px;height:21px;border:1px solid #c6c6c6;box-sizing:border-box;background:#fff"></div>
<svg class="r" style="left:921px;top:569px" width="10" height="8"><polygon points="0,0.5 9.5,0.5 4.75,7.5" fill="#000"/></svg>
<div class="r" style="left:1169px;top:563px;width:294px;height:24px;border:1px solid #c6c6c6;border-right:none;box-sizing:border-box;background:#fff"></div>
<div class="r" style="left:1463px;top:563px;width:26px;height:29px;border:1px solid #c6c6c6;border-left:none;box-sizing:border-box;background:#fff"></div>
<div class="r" style="left:1463px;top:564px;width:25px;height:24px;background:linear-gradient(#f1f2f5,#e4e6eb)"></div>
<div class="r" style="left:1465px;top:567px;width:20px;height:20px"><svg width="21" height="20" viewBox="0 0 21 20"><defs><linearGradient id="lg6" x1="0" y1="0" x2="1" y2="1"><stop offset="0" stop-color="#ffffff"/><stop offset="1" stop-color="#e4ecf8"/></linearGradient><radialGradient id="rg6" cx="0.4" cy="0.35" r="0.7"><stop offset="0" stop-color="#ffffff"/><stop offset="1" stop-color="#b8cce8"/></radialGradient></defs><rect x="0.75" y="0.5" width="17.5" height="14" fill="url(#lg6)" stroke="#56698c" stroke-width="1.3"/><rect x="0.1" y="0" width="18.2" height="3.8" fill="#3f6fd8"/><circle cx="11" cy="9.6" r="4.1" fill="url(#rg6)" stroke="#6d8878" stroke-width="1.5"/><path d="M14.2,13.6 L16.8,12 L19.2,15.2 L16.6,18.2 Z" fill="#eea234"/><path d="M16.6,18.2 L17.8,16.8 L16.8,16" fill="#8a5a20"/></svg></div>
<div class="r" style="left:622px;top:598px;width:319px;height:21px;border:1px solid #c6c6c6;box-sizing:border-box;background:#fff"></div>
<div class="r" style="left:1169px;top:598px;width:320px;height:21px;border:1px solid #c6c6c6;box-sizing:border-box;background:#fff"></div>
<div class="r" style="left:622px;top:626px;width:298px;height:1px;background:#a8a8b0"></div>
<div class="r" style="left:622px;top:627px;width:298px;height:24px;background:#e9e9e3"></div>
<div class="r" style="left:622px;top:651px;width:298px;height:1px;background:#dcdcec"></div>
<div class="r" style="left:920px;top:626px;width:21px;height:22px;background:#cfd2e4"></div>
<div class="r" style="left:920px;top:627px;width:20px;height:21px;border:1.5px solid #a2a6bc;border-radius:3px;box-sizing:border-box;background:linear-gradient(#ffffff 0%,#fbfbfd 30%,#dcdcea 55%,#cacee0 100%)"></div>
<svg class="r" style="left:924px;top:633px" width="12" height="8"><polyline points="1,1 6,6 11,1" fill="none" stroke="#b6b6c2" stroke-width="2"/></svg>
<div class="r" style="left:622px;top:658px;width:298px;height:1px;background:#a8a8b0"></div>
<div class="r" style="left:622px;top:659px;width:298px;height:24px;background:#e9e9e3"></div>
<div class="r" style="left:622px;top:683px;width:298px;height:1px;background:#dcdcec"></div>
<div class="r" style="left:920px;top:658px;width:21px;height:22px;background:#cfd2e4"></div>
<div class="r" style="left:920px;top:659px;width:20px;height:21px;border:1.5px solid #a2a6bc;border-radius:3px;box-sizing:border-box;background:linear-gradient(#ffffff 0%,#fbfbfd 30%,#dcdcea 55%,#cacee0 100%)"></div>
<svg class="r" style="left:924px;top:665px" width="12" height="8"><polyline points="1,1 6,6 11,1" fill="none" stroke="#b6b6c2" stroke-width="2"/></svg>
<div class="r" style="left:1175px;top:632px;width:14px;height:14px;border-radius:50%;box-sizing:border-box;border:1px solid #9a9a9a;background:radial-gradient(circle at 50% 35%,#f4f4f4,#d6d6d6)"></div>
<div class="r" style="left:1229px;top:632px;width:14px;height:14px;border-radius:50%;box-sizing:border-box;border:1px solid #9a9a9a;background:radial-gradient(circle at 50% 35%,#f4f4f4,#d6d6d6)"></div>
<div class="r" style="left:609px;top:750px;width:879px;height:21px;border:1px solid #c6c6c6;box-sizing:border-box;background:#fff"></div>
<svg class="r" style="left:1469px;top:755px" width="10" height="9"><polygon points="0,0.5 9.5,0.5 4.75,8.5" fill="#000"/></svg>
<div class="r" style="left:1319px;top:825px;width:96px;height:29px;background:#1160b7"></div>
<div class="t" style="left:1342.20px;top:832.46px;font-size:15.07px;line-height:15.07px;color:#ffffff;font-weight:700;transform:scaleX(0.8794);transform-origin:0 0;">Change</div>
<div class="r" style="left:1428px;top:825px;width:96px;height:29px;border:1.5px solid #1a73d0;box-sizing:border-box;background:#fff"></div>
<div class="t" style="left:1453.80px;top:832.46px;font-size:15.07px;line-height:15.07px;color:#1a73d0;font-weight:400;transform:scaleX(0.9089);transform-origin:0 0;">Cancel</div>
</body></html>
